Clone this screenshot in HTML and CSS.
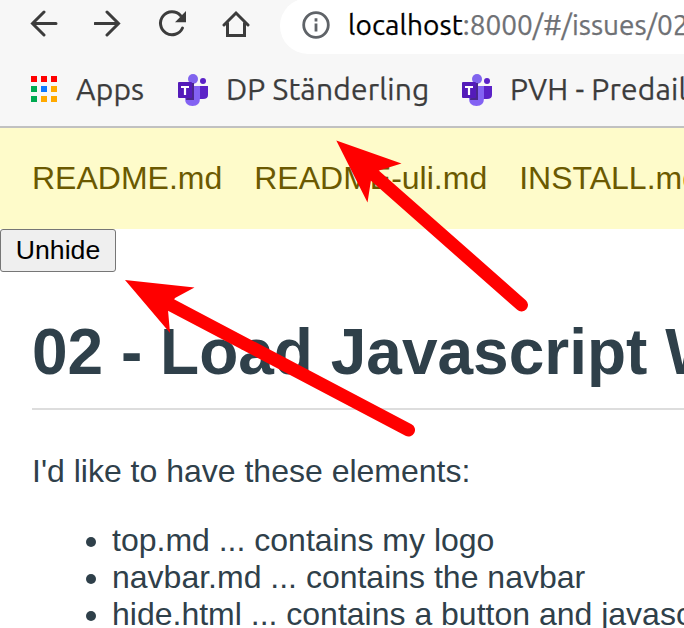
FILE: index.html
```html
<!DOCTYPE html>
<html lang="en">
<head>
<meta charset="utf-8">
<title>02 - Load Javascript</title>
<link rel="stylesheet" href="styles.css">
</head>
<body>
<svg class="symbols" aria-hidden="true">
  <symbol id="teams" viewBox="0 0 30 32">
    <circle cx="15" cy="5" r="5" fill="#8064ee"/>
    <circle cx="25" cy="7" r="3" fill="#5b22c7"/>
    <path d="M19 12h11v9q0 4-5 4h-6z" fill="#5b22c7"/>
    <path d="M7 12h15v12q0 8-7.500 8T7 24z" fill="#8362f3"/>
    <path d="M10 9h6v17H8z" fill="#4a278d"/>
    <rect y="8" width="14" height="16" rx="1" fill="#541bb9"/>
    <path d="M3 13h8M7 12v9" stroke="#fff" stroke-width="2.200" fill="none"/>
  </symbol>
</svg>
<header class="browser">
  <div class="toolbar">
    <svg class="tool" viewBox="0 0 28 28"><path d="M26 13.500H3M14 2 2.500 13.500 14 25"/></svg>
    <svg class="tool" viewBox="0 0 28 28"><path d="M1 13.500h23M13 2 24.500 13.500 13 25"/></svg>
    <svg class="tool" viewBox="0 0 28 28"><path d="M22.500 5.500A11.500 11.500 0 1 0 24.500 18"/><path class="solid" d="M28 1v11.300H17z"/></svg>
    <svg class="tool" viewBox="0 0 28 28"><path d="M2 15 14 3l12 12M5.500 13v12.500h17V13"/></svg>
    <div class="address">
      <svg class="info" viewBox="0 0 28 28"><circle cx="14" cy="14" r="12.300"/><path d="M14 12.500v8M14 7.300v3.200"/></svg>
      <span class="host">localhost</span><span class="path">:8000/#/issues/02</span>
    </div>
  </div>
  <div class="bookmarks">
    <svg class="grid" viewBox="0 0 26 26">
      <path fill="#f00" d="M0 0h6v6H0zM10 0h6v6h-6zM20 0h6v6h-6z"/>
      <path fill="#00a950" d="M0 10h6v6H0zM0 20h6v6H0z"/>
      <path fill="#0b78ff" d="M10 10h6v6h-6z"/>
      <path fill="#ffa900" d="M20 10h6v6h-6zM10 20h6v6h-6zM20 20h6v6h-6z"/>
    </svg>
    <span class="label apps">Apps</span>
    <svg class="teams"><use href="#teams"/></svg>
    <span class="label dp">DP Ständerling</span>
    <svg class="teams"><use href="#teams"/></svg>
    <span class="label pvh">PVH - Predail</span>
  </div>
</header>
<nav class="nav"><a>README.md</a><a>README-uli.md</a><a>INSTALL.md</a></nav>
<button class="unhide">Unhide</button>
<main class="content">
  <h1>02 - Load Javascript W</h1>
  <p>I'd like to have these elements:</p>
  <ul>
    <li>top.md ... contains my logo</li>
    <li>navbar.md ... contains the navbar</li>
    <li>hide.html ... contains a button and javascript</li>
  </ul>
</main>
<svg class="arrows" viewBox="0 0 684 628" aria-hidden="true">
  <path class="shaft" d="M373 174 521.500 305M171 305 408.500 430"/>
  <path class="head" d="M336.300 140.500 401.500 163.500 379 170.500 371 180 367.500 202.500zM125 280 194.500 287.500 175 298 168 310 170 333z"/>
</svg>
</body>
</html>
```
FILE: styles.css
```css
* { box-sizing: border-box; }
body {
  margin: 0;
  width: 684px;
  height: 628px;
  overflow: hidden;
  position: relative;
  background: #fff;
  color: #2f404a;
  font: 32px/37px "Liberation Sans", Arial, sans-serif;
  white-space: nowrap;
}
.symbols { display: none; }
.browser {
  height: 128px;
  background: #f7f7f7;
  border-bottom: 2px solid #c1c1c1;
  font-family: Ubuntu, "Noto Sans", sans-serif;
  font-size: 28px;
  -webkit-text-stroke: .25px currentColor;
  overflow: hidden;
}
.toolbar { display: flex; height: 54px; padding-left: 30px; }
.tool { width: 28px; height: 28px; margin: 10px 36px 0 0; flex: none; }
.tool path { fill: none; stroke: #3c3c3c; stroke-width: 3; stroke-linecap: round; }
.tool .solid { fill: #3c3c3c; stroke: none; }
.address {
  display: flex;
  align-items: center;
  flex: none;
  width: 404px;
  height: 56px;
  margin: -2px 0 0 -6px;
  padding: 0 0 3px 22px;
  border-radius: 28px 0 0 28px;
  background: #fff;
  overflow: hidden;
}
.info { width: 28px; height: 28px; margin: 0 18px 0 0; flex: none; }
.info circle, .info path { fill: none; stroke: #5f6368; stroke-width: 2.800; }
.host { color: #000; letter-spacing: .1px; }
.path { color: #6f7175; }
.bookmarks { display: flex; align-items: center; height: 72px; padding-left: 31px; color: #3c3c3c; font-size: 30px; }
.bookmarks svg { flex: none; }
.grid { width: 26px; height: 26px; margin-right: 19px; margin-top: -2px; }
.teams { width: 30px; height: 32px; margin-right: 18px; }
.label { flex: none; margin-top: -2px; letter-spacing: .17px; }
.apps { width: 102px; }
.dp { width: 236px; }
.nav { display: flex; gap: 32px; height: 101px; padding: 32px; background: #fefbca; color: #6b5900; overflow: hidden; }
.unhide {
  display: block;
  width: 116px;
  height: 43px;
  padding: 0;
  border: 1px solid #767676;
  border-radius: 3px;
  background: #efefef;
  color: #000;
  font: 26.667px/39px "Liberation Sans", Arial, sans-serif;
}
.content { padding: 43px 0 0 32px; }
h1 { margin: 0 0 43px; height: 95px; border-bottom: 2px solid #ddd; font-size: 64px; line-height: 75px; }
p { margin: 0 0 32px; }
ul { margin: 0; padding-left: 80px; }
.arrows { position: absolute; inset: 0; width: 684px; height: 628px; pointer-events: none; }
.shaft { fill: none; stroke: #f00; stroke-width: 13; stroke-linecap: round; }
.head { fill: #f00; }
```
